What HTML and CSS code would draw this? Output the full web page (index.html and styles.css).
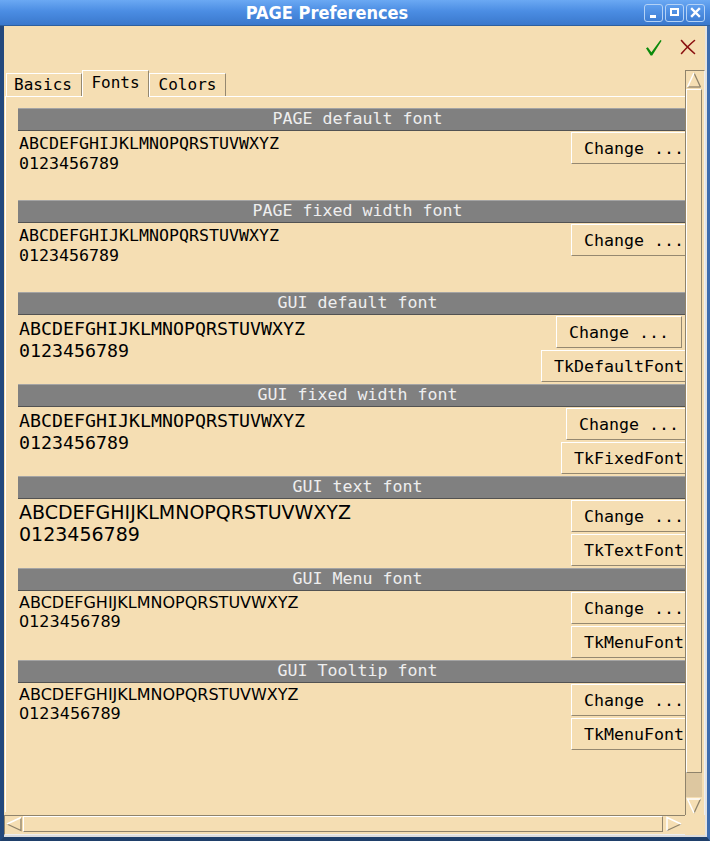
FILE: index.html
```html
<!DOCTYPE html>
<html>
<head>
<meta charset="utf-8">
<title>PAGE Preferences</title>
<link rel="stylesheet" href="styles.css">
</head>
<body>
<div class="window">
  <div class="titlebar">
    <div class="title">PAGE Preferences</div>
    <div class="wm-buttons">
      <div class="wm-btn"><svg width="17" height="16" viewBox="0 0 17 16"><rect x="5" y="10" width="6" height="3" fill="#fff"/></svg></div>
      <div class="wm-btn"><svg width="17" height="16" viewBox="0 0 17 16"><rect x="5" y="4" width="7" height="6" fill="none" stroke="#fff" stroke-width="2"/></svg></div>
      <div class="wm-btn"><svg width="17" height="16" viewBox="0 0 17 16"><path d="M5 4 L12 11 M12 4 L5 11" stroke="#fff" stroke-width="2.4" stroke-linecap="square"/></svg></div>
    </div>
  </div>
  <div class="frame">
    <div class="frame-inner">
      <div class="toolbar">
        <svg class="ok" width="18" height="18" viewBox="0 0 18 18"><path d="M1 9.2 L2.8 8.2 L6.4 13.2 L15.4 1 L16.6 1.7 L7.2 16.6 L5.6 16.6 Z" fill="#0b8a0b"/></svg>
        <svg class="cancel" width="16" height="16" viewBox="0 0 16 16"><path d="M1.5 1.5 Q5 6 14.5 14.5 M14.5 1.5 Q9 6 1.5 14.5" fill="none" stroke="#8b1010" stroke-width="1.6" stroke-linecap="round"/></svg>
      </div>
      <div class="main">
        <div class="viewport">
          <div class="notebook">
            <div class="tabs">
              <div class="tab tab-basics">Basics</div>
              <div class="tab tab-fonts selected">Fonts</div>
              <div class="tab tab-colors">Colors</div>
            </div>
            <div class="pane">
              <div class="section">
                <div class="sec-head">PAGE default font</div>
                <div class="sec-body">
                  <div class="sample mono-s"><div>ABCDEFGHIJKLMNOPQRSTUVWXYZ</div><div>0123456789</div></div>
                  <div class="btns"><div class="btn">Change ...</div></div>
                </div>
              </div>
              <div class="section">
                <div class="sec-head">PAGE fixed width font</div>
                <div class="sec-body">
                  <div class="sample mono-s"><div>ABCDEFGHIJKLMNOPQRSTUVWXYZ</div><div>0123456789</div></div>
                  <div class="btns"><div class="btn">Change ...</div></div>
                </div>
              </div>
              <div class="section">
                <div class="sec-head">GUI default font</div>
                <div class="sec-body">
                  <div class="sample mono-l"><div>ABCDEFGHIJKLMNOPQRSTUVWXYZ</div><div>0123456789</div></div>
                  <div class="btns"><div class="btn">Change ...</div><div class="btn">TkDefaultFont</div></div>
                </div>
              </div>
              <div class="section">
                <div class="sec-head">GUI fixed width font</div>
                <div class="sec-body">
                  <div class="sample mono-l"><div>ABCDEFGHIJKLMNOPQRSTUVWXYZ</div><div>0123456789</div></div>
                  <div class="btns"><div class="btn">Change ...</div><div class="btn">TkFixedFont</div></div>
                </div>
              </div>
              <div class="section">
                <div class="sec-head">GUI text font</div>
                <div class="sec-body">
                  <div class="sample sans-l"><div>ABCDEFGHIJKLMNOPQRSTUVWXYZ</div><div>0123456789</div></div>
                  <div class="btns"><div class="btn">Change ...</div><div class="btn">TkTextFont</div></div>
                </div>
              </div>
              <div class="section">
                <div class="sec-head">GUI Menu font</div>
                <div class="sec-body">
                  <div class="sample sans-s"><div>ABCDEFGHIJKLMNOPQRSTUVWXYZ</div><div>0123456789</div></div>
                  <div class="btns"><div class="btn">Change ...</div><div class="btn">TkMenuFont</div></div>
                </div>
              </div>
              <div class="section">
                <div class="sec-head">GUI Tooltip font</div>
                <div class="sec-body">
                  <div class="sample sans-s"><div>ABCDEFGHIJKLMNOPQRSTUVWXYZ</div><div>0123456789</div></div>
                  <div class="btns"><div class="btn">Change ...</div><div class="btn">TkMenuFont</div></div>
                </div>
              </div>
            </div>
          </div>
        </div>
        <div class="vscroll">
          <div class="arrow arrow-v"><svg width="16" height="18" viewBox="0 0 16 18"><polygon points="8,2 1.5,16 14.5,16" fill="#f5deb3"/><path d="M14.5 16 L8 2" stroke="#8f836b" stroke-width="1.3" fill="none"/><path d="M1.5 16 L14.5 16" stroke="#8f836b" stroke-width="1.3" fill="none"/><path d="M8 2 L1.5 16" stroke="#ffffff" stroke-width="1.5" fill="none"/></svg></div>
          <div class="vthumb"></div>
          <div class="trough"></div>
          <div class="arrow arrow-v"><svg width="16" height="18" viewBox="0 0 16 18"><polygon points="1.5,2 14.5,2 8,16" fill="#f5deb3"/><path d="M14.5 2 L8 16" stroke="#8f836b" stroke-width="1.3" fill="none"/><path d="M8 16 L1.5 2 L14.5 2" stroke="#ffffff" stroke-width="1.5" fill="none"/></svg></div>
        </div>
      </div>
      <div class="hbar">
        <div class="hscroll">
          <div class="arrow arrow-hl"><svg width="18" height="16" viewBox="0 0 18 16"><polygon points="2,8 16,1.5 16,14.5" fill="#f5deb3"/><path d="M2 8 L16 14.5 L16 1.5" stroke="#8f836b" stroke-width="1.3" fill="none"/><path d="M16 1.5 L2 8" stroke="#ffffff" stroke-width="1.5" fill="none"/></svg></div>
          <div class="hthumb"></div>
          <div class="arrow arrow-hr"><svg width="20" height="16" viewBox="0 0 20 16"><polygon points="4,1.5 4,14.5 18,8" fill="#f5deb3"/><path d="M18 8 L4 14.5" stroke="#8f836b" stroke-width="1.3" fill="none"/><path d="M4 14.5 L4 1.5 L18 8" stroke="#ffffff" stroke-width="1.5" fill="none"/></svg></div>
        </div>
        <div class="corner"></div>
      </div>
    </div>
  </div>
</div>
</body>
</html>
```
FILE: styles.css
```css
* { box-sizing: border-box; }
html, body { margin: 0; padding: 0; }
body {
  width: 710px;
  height: 841px;
  overflow: hidden;
  background: #f5deb3;
  font-family: "DejaVu Sans", sans-serif;
  color: #000;
}
.window {
  width: 710px;
  height: 841px;
  display: flex;
  flex-direction: column;
}
.titlebar {
  height: 26px;
  flex: none;
  display: flex;
  align-items: center;
  background: linear-gradient(#6ba9f3, #4b8de3 45%, #3a78cc);
  border-bottom: 1px solid #2d5f9e;
}
.title {
  flex: 1;
  text-align: center;
  padding-left: 10px;
  color: #fff;
  font-family: "DejaVu Sans Condensed", "DejaVu Sans", sans-serif;
  font-stretch: condensed;
  font-weight: bold;
  font-size: 18px;
  line-height: 25px;
  white-space: nowrap;
}
.wm-buttons {
  display: flex;
  gap: 2px;
  padding-right: 5px;
}
.wm-btn {
  width: 19px;
  height: 18px;
  border: 1px solid #b4d2f6;
  border-radius: 3px;
  background: linear-gradient(#5e9eee, #3e7ed4);
  display: flex;
}
.frame {
  flex: 1;
  display: flex;
  flex-direction: column;
  border-left: 4px solid #23487c;
  border-right: 3px solid #3d6cae;
  border-bottom: 4px solid #1f3f6a;
}
.frame-inner {
  flex: 1;
  display: flex;
  flex-direction: column;
  border-right: 2px solid #e2e2e2;
  border-bottom: 2px solid #dcdcdc;
}
.toolbar {
  height: 44px;
  flex: none;
  display: flex;
  justify-content: flex-end;
  align-items: flex-start;
  gap: 17px;
  padding-top: 13px;
  padding-right: 9px;
}
.main {
  height: 745px;
  flex: none;
  display: flex;
}
.viewport {
  width: 681px;
  overflow: hidden;
}
.notebook {
  margin-left: 1px;
  width: 705px;
}
.tabs {
  height: 26px;
  display: flex;
  align-items: flex-end;
  padding-left: 1px;
}
.tab {
  height: 23px;
  border-top: 1px solid #ffffff;
  border-left: 1px solid #ffffff;
  border-right: 1px solid #958870;
  padding-top: 1px;
  font-family: "DejaVu Sans Mono", monospace;
  font-size: 16px;
  line-height: 19px;
  text-align: center;
  white-space: nowrap;
  background: #f5deb3;
}
.tab-basics { width: 76px; padding-right: 2px; }
.tab-fonts { width: 67px; }
.tab-colors { width: 77px; }
.tab.selected {
  height: 27px;
  margin-bottom: -1px;
  padding-top: 2px;
  position: relative;
  z-index: 1;
}
.pane {
  width: 705px;
  border-top: 1px solid #ffffff;
  border-left: 1px solid #ffffff;
  border-right: 1px solid #958870;
  padding: 11px 12px 60px 12px;
}
.section {
  width: 679px;
  height: 92px;
}
.sec-head {
  height: 23px;
  background: #808080;
  border-top: 1px solid #a4a4a4;
  border-bottom: 1px solid #525252;
  color: #eeeeee;
  font-family: "DejaVu Sans Mono", monospace;
  font-size: 16.61px;
  line-height: 19px;
  padding-bottom: 2px;
  text-align: center;
  white-space: nowrap;
}
.sec-body {
  display: flex;
  justify-content: space-between;
  align-items: flex-start;
}
.sample {
  padding-left: 1px;
  white-space: nowrap;
}
.mono-s {
  font-family: "DejaVu Sans Mono", monospace;
  font-size: 16.61px;
  line-height: 20px;
  margin-top: 3px;
}
.mono-l {
  font-family: "DejaVu Sans Mono", monospace;
  font-size: 18.27px;
  line-height: 22px;
  margin-top: 3px;
}
.sans-l {
  font-family: "DejaVu Sans", sans-serif;
  font-size: 19px;
  line-height: 22px;
  margin-top: 2px;
}
.sans-s {
  font-family: "DejaVu Sans", sans-serif;
  font-size: 16px;
  line-height: 19px;
  margin-top: 2px;
}
.btns {
  display: flex;
  flex-direction: column;
  align-items: center;
  gap: 2px;
  margin-top: 1px;
}
.btn {
  border: 1px solid;
  border-color: #ffffff #958870 #958870 #ffffff;
  padding: 7px 12px 5px 12px;
  font-family: "DejaVu Sans Mono", monospace;
  font-size: 16.61px;
  line-height: 18px;
  white-space: nowrap;
  background: #f5deb3;
}
.vscroll {
  width: 20px;
  display: flex;
  flex-direction: column;
  border-left: 1px solid #8f836b;
  border-top: 1px solid #8f836b;
  border-right: 1px solid #eeeeee;
  padding-right: 2px;
  background: #f5deb3;
}
.arrow {
  flex: none;
  display: flex;
  background: #f5deb3;
}
.arrow-v { height: 18px; }
.vthumb {
  height: 684px;
  flex: none;
  border: 1px solid;
  border-color: #ffffff #8f836b #8f836b #ffffff;
  background: #f5deb3;
}
.trough {
  flex: 1;
  background: #ddc7a0;
}
.hbar {
  height: 20px;
  flex: none;
  display: flex;
}
.hscroll {
  width: 681px;
  display: flex;
  border-top: 1px solid #8f836b;
  border-left: 1px solid #8f836b;
  border-bottom: 1px solid #eeeeee;
  padding-bottom: 2px;
  padding-right: 2px;
}
.arrow-hl { width: 18px; }
.arrow-hr { width: 20px; }
.hthumb {
  flex: 1;
  border: 1px solid;
  border-color: #ffffff #8f836b #8f836b #ffffff;
  background: #f5deb3;
}
.corner {
  width: 20px;
  background: #f5deb3;
}
```
